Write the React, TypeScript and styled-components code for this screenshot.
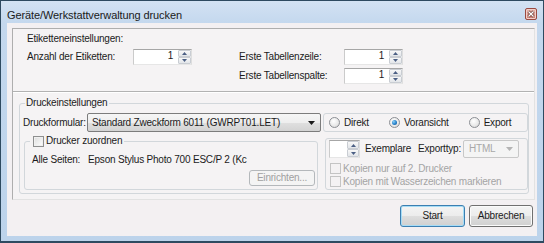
import React from "react";
import styled, { createGlobalStyle } from "styled-components";

const Global = createGlobalStyle`
  html, body { margin: 0; padding: 0; background: #ffffff; }
  body {
    font-family: "Liberation Sans", Arial, sans-serif;
    font-size: 10px;
    letter-spacing: -0.2px;
    color: #1b1b1b;
  }
  * { box-sizing: border-box; }
`;

const Window = styled.div`
  width: 544px;
  height: 243px;
  border: 1px solid #2e4a60;
  border-bottom-width: 2px;
  background: linear-gradient(to bottom, #d3e2f3 0px, #c4d8ee 22px, #bcd3eb 100%);
  display: flex;
  flex-direction: column;
  padding: 0 6px 5px 6px;
`;

const TitleBar = styled.div`
  height: 22px;
  display: flex;
  align-items: flex-start;
`;

const Title = styled.div`
  padding-top: 8px;
  font-size: 11px;
  line-height: 13px;
  letter-spacing: -0.1px;
  color: #1a1a1a;
`;

const CloseBox = styled.div`
  margin: 7px 0 0 auto;
  width: 12px;
  height: 12px;
  border: 1px solid #9a4a40;
  border-radius: 2px;
  background: linear-gradient(#e8b8af, #c97b70);
  box-shadow: inset 0 0 0 1px #f1cfc9;
  display: flex;
  align-items: center;
  justify-content: center;
`;

const Client = styled.div`
  flex: 1;
  background: #f3f0f2;
  display: flex;
  flex-direction: column;
  padding: 5px 2px 0 5px;
`;

const Panel = styled.div`
  height: 172px;
  border: 1px solid;
  border-color: #aeaeae #e2e2e2 #e2e2e2 #aeaeae;
  background: #f5f3f4;
  display: flex;
  flex-direction: column;
`;

const TopSection = styled.div`
  height: 62px;
  padding: 4px 0 0 14px;
  display: flex;
  flex-direction: column;
  gap: 4px;
`;

const Divider = styled.div`
  height: 2px;
  border-top: 1px solid #b2b2b2;
  border-bottom: 1px solid #ffffff;
`;

const BottomSection = styled.div`
  height: 106px;
  padding: 4px 5px 5px 6px;
  display: flex;
`;

const Heading = styled.div`
  line-height: 12px;
`;

const LabelGrid = styled.div`
  display: grid;
  grid-template-columns: 106px 59px 47px 105px 59px;
  grid-auto-rows: 16px;
  row-gap: 3px;
  align-items: center;
`;

const Label = styled.div<{ $disabled?: boolean }>`
  line-height: 12px;
  white-space: nowrap;
  color: ${(p) => (p.$disabled ? "#a4a4a4" : "#1b1b1b")};
`;

const SpinBox = styled.div<{ $w: number; $h: number }>`
  display: flex;
  flex: none;
  width: ${(p) => p.$w}px;
  height: ${(p) => p.$h}px;
  background: #ffffff;
  border: 1px solid;
  border-color: #a6a6a6 #dedede #e6e6e6 #cbcbcb;
`;

const SpinValue = styled.div`
  flex: 1;
  text-align: right;
  padding-right: 5px;
  line-height: 12px;
`;

const SpinButtons = styled.div<{ $w: number }>`
  width: ${(p) => p.$w}px;
  display: flex;
  flex-direction: column;
`;

const SpinBtn = styled.div`
  flex: 1;
  border: 1px solid #c9cdd3;
  border-radius: 1px;
  background: linear-gradient(#f8f8f8, #e2e5e9);
  display: flex;
  align-items: center;
  justify-content: center;
`;

const GroupBox = styled.fieldset<{ $pl: number; $pt: number; $pb: number; $pr: number }>`
  margin: 0;
  min-width: 0;
  border: 1px solid #d2d7db;
  border-radius: 3px;
  padding: ${(p) => `${p.$pt}px ${p.$pr}px ${p.$pb}px ${p.$pl}px`};
  display: flex;
  flex-direction: column;
`;

const MainGroup = styled(GroupBox)`
  flex: 1;
  height: 97px;
`;

const Legend = styled.legend<{ $ml: number; $pl: number }>`
  margin-left: ${(p) => p.$ml}px;
  padding: 0 2px 0 ${(p) => p.$pl}px;
  line-height: 12px;
  height: 12px;
  display: flex;
  align-items: center;
  gap: 2px;
`;

const Row = styled.div<{ $h: number; $mt?: number; $end?: boolean }>`
  display: flex;
  align-items: center;
  justify-content: ${(p) => (p.$end ? "flex-end" : "flex-start")};
  height: ${(p) => p.$h}px;
  margin-top: ${(p) => p.$mt ?? 0}px;
`;

const FieldLabel = styled.div<{ $w: number; $pl?: number }>`
  width: ${(p) => p.$w}px;
  padding-left: ${(p) => p.$pl ?? 0}px;
  flex: none;
  line-height: 12px;
  white-space: nowrap;
`;

const Combo = styled.div<{ $w: number; $h: number; $disabled?: boolean }>`
  width: ${(p) => p.$w}px;
  height: ${(p) => p.$h}px;
  flex: none;
  border: 1px solid ${(p) => (p.$disabled ? "#c8c8c8" : "#7c7c7c")};
  border-radius: 2px;
  background: ${(p) =>
    p.$disabled
      ? "#f4f4f4"
      : "linear-gradient(#f6f6f6 0%, #eeeeee 50%, #e0e0e0 50%, #d3d3d3 100%)"};
  color: ${(p) => (p.$disabled ? "#a8a8a8" : "#1b1b1b")};
  display: flex;
  align-items: center;
  padding: 0 5px 0 3px;
  line-height: 12px;
  white-space: nowrap;
  overflow: hidden;
`;

const ComboText = styled.span<{ $pad: number }>`
  flex: 1;
  padding-left: ${(p) => p.$pad}px;
  overflow: hidden;
`;

const OptionBox = styled.div`
  width: 205px;
  height: 19px;
  margin-left: 2px;
  border: 1px solid #d2d7db;
  border-radius: 3px;
  display: flex;
  align-items: center;
  gap: 20px;
  padding-left: 5px;
`;

const RadioItem = styled.div`
  display: flex;
  align-items: center;
  gap: 4px;
  line-height: 12px;
`;

const RadioCircle = styled.div<{ $checked?: boolean }>`
  width: 11px;
  height: 11px;
  border-radius: 50%;
  border: 1px solid #8c8f94;
  background: radial-gradient(circle at 40% 35%, #ffffff 0%, #e8e8e8 60%, #cfcfcf 100%);
  display: flex;
  align-items: center;
  justify-content: center;
  &::after {
    content: "";
    display: ${(p) => (p.$checked ? "block" : "none")};
    width: 5px;
    height: 5px;
    border-radius: 50%;
    background: radial-gradient(circle at 35% 35%, #8fd0f5 0%, #2a86cf 50%, #0c4f90 100%);
  }
`;

const CheckBox = styled.div<{ $disabled?: boolean }>`
  width: 11px;
  height: 11px;
  flex: none;
  border: 1px solid ${(p) => (p.$disabled ? "#c4c4c4" : "#8e8f8f")};
  background: ${(p) =>
    p.$disabled ? "#f4f2f3" : "linear-gradient(135deg, #dcdcdc, #ffffff)"};
  box-shadow: ${(p) => (p.$disabled ? "none" : "inset 0 0 0 1px #f0f0f0")};
`;

const GroupRow = styled.div`
  display: flex;
  margin-top: 3px;
  height: 55px;
  gap: 7px;
  padding-left: 1px;
`;

const PrinterGroup = styled(GroupBox)`
  width: 294px;
  height: 55px;
`;

const PrinterName = styled.div`
  white-space: nowrap;
  line-height: 12px;
`;

const CopiesBox = styled.div`
  width: 203px;
  height: 52px;
  align-self: flex-end;
  border: 1px solid #d2d7db;
  border-radius: 3px;
  padding: 1px 0 1px 3px;
  display: flex;
  flex-direction: column;
`;

const CheckRow = styled.div<{ $mt?: number }>`
  display: flex;
  align-items: center;
  gap: 2px;
  height: 13px;
  margin-top: ${(p) => p.$mt ?? 0}px;
  padding-left: 1px;
`;

const ButtonRow = styled.div`
  display: flex;
  justify-content: flex-end;
  gap: 4px;
  padding: 5px 2px 0 0;
`;

const Button = styled.div<{ $w: number; $h: number; $default?: boolean; $disabled?: boolean }>`
  width: ${(p) => p.$w}px;
  height: ${(p) => p.$h}px;
  border: 1px solid
    ${(p) => (p.$disabled ? "#b4b8bb" : p.$default ? "#3c7fb1" : "#707070")};
  border-radius: 3px;
  background: ${(p) =>
    p.$disabled
      ? "#f4f4f4"
      : "linear-gradient(#f4f4f4 0%, #ececec 50%, #dedede 50%, #d0d0d0 100%)"};
  box-shadow: ${(p) =>
    p.$disabled
      ? "none"
      : p.$default
      ? "inset 0 0 0 1px #a6dcf6"
      : "inset 0 0 0 1px #fbfbfb"};
  color: ${(p) => (p.$disabled ? "#a0a0a0" : "#1b1b1b")};
  display: flex;
  align-items: center;
  justify-content: center;
  line-height: 12px;
  flex: none;
`;

const Arrow = ({ up, color = "#4b5f84" }: { up?: boolean; color?: string }) => (
  <svg width="5" height="3" viewBox="0 0 5 3">
    <path d={up ? "M0 3 L2.5 0 L5 3 Z" : "M0 0 L5 0 L2.5 3 Z"} fill={color} />
  </svg>
);

const DropArrow = ({ color }: { color: string }) => (
  <svg width="7" height="4" viewBox="0 0 7 4">
    <path d="M0 0 L7 0 L3.5 4 Z" fill={color} />
  </svg>
);

const Spinner = ({ w, h, value, btnW }: { w: number; h: number; value?: string; btnW: number }) => (
  <SpinBox $w={w} $h={h}>
    <SpinValue>{value}</SpinValue>
    <SpinButtons $w={btnW}>
      <SpinBtn>
        <Arrow up />
      </SpinBtn>
      <SpinBtn>
        <Arrow />
      </SpinBtn>
    </SpinButtons>
  </SpinBox>
);

export default function App() {
  return (
    <>
      <Global />
      <Window>
        <TitleBar>
          <Title>Geräte/Werkstattverwaltung drucken</Title>
          <CloseBox>
            <svg width="8" height="8" viewBox="0 0 8 8">
              <path d="M1.5 1.5 L6.5 6.5 M6.5 1.5 L1.5 6.5" stroke="#5a2620" strokeWidth="2.6" />
              <path d="M1.5 1.5 L6.5 6.5 M6.5 1.5 L1.5 6.5" stroke="#ffffff" strokeWidth="1.4" />
            </svg>
          </CloseBox>
        </TitleBar>
        <Client>
          <Panel>
            <TopSection>
              <Heading>Etiketteneinstellungen:</Heading>
              <LabelGrid>
                <Label>Anzahl der Etiketten:</Label>
                <Spinner w={59} h={16} value="1" btnW={13} />
                <span />
                <Label>Erste Tabellenzeile:</Label>
                <Spinner w={59} h={16} value="1" btnW={13} />
                <span />
                <span />
                <span />
                <Label>Erste Tabellenspalte:</Label>
                <Spinner w={59} h={16} value="1" btnW={13} />
              </LabelGrid>
            </TopSection>
            <Divider />
            <BottomSection>
              <MainGroup $pl={3} $pt={4} $pb={3} $pr={0}>
                <Legend $ml={2} $pl={1}>Druckeinstellungen</Legend>
                <Row $h={19}>
                  <FieldLabel $w={64}>Druckformular:</FieldLabel>
                  <Combo $w={234} $h={19}>
                    <ComboText $pad={1}>Standard Zweckform 6011 (GWRPT01.LET)</ComboText>
                    <DropArrow color="#1a1a1a" />
                  </Combo>
                  <OptionBox>
                    <RadioItem>
                      <RadioCircle />
                      Direkt
                    </RadioItem>
                    <RadioItem>
                      <RadioCircle $checked />
                      Voransicht
                    </RadioItem>
                    <RadioItem>
                      <RadioCircle />
                      Export
                    </RadioItem>
                  </OptionBox>
                </Row>
                <GroupRow>
                  <PrinterGroup $pl={7} $pt={7} $pb={3} $pr={2}>
                    <Legend $ml={-2} $pl={3}>
                      <CheckBox />
                      Drucker zuordnen
                    </Legend>
                    <Row $h={12}>
                      <FieldLabel $w={56}>Alle Seiten:</FieldLabel>
                      <PrinterName>Epson Stylus Photo 700 ESC/P 2 (Kc</PrinterName>
                    </Row>
                    <Row $h={16} $mt={4} $end>
                      <Button $w={66} $h={16} $disabled>
                        Einrichten...
                      </Button>
                    </Row>
                  </PrinterGroup>
                  <CopiesBox>
                    <Row $h={18}>
                      <Spinner w={31} h={18} btnW={12} />
                      <FieldLabel $w={58} $pl={5}>Exemplare</FieldLabel>
                      <FieldLabel $w={45}>Exporttyp:</FieldLabel>
                      <Combo $w={56} $h={18} $disabled>
                        <ComboText $pad={2}>HTML</ComboText>
                        <DropArrow color="#b4b4b4" />
                      </Combo>
                    </Row>
                    <CheckRow $mt={4}>
                      <CheckBox $disabled />
                      <Label $disabled>Kopien nur auf 2. Drucker</Label>
                    </CheckRow>
                    <CheckRow>
                      <CheckBox $disabled />
                      <Label $disabled>Kopien mit Wasserzeichen markieren</Label>
                    </CheckRow>
                  </CopiesBox>
                </GroupRow>
              </MainGroup>
            </BottomSection>
          </Panel>
          <ButtonRow>
            <Button $w={65} $h={22} $default>
              Start
            </Button>
            <Button $w={64} $h={22}>
              Abbrechen
            </Button>
          </ButtonRow>
        </Client>
      </Window>
    </>
  );
}
